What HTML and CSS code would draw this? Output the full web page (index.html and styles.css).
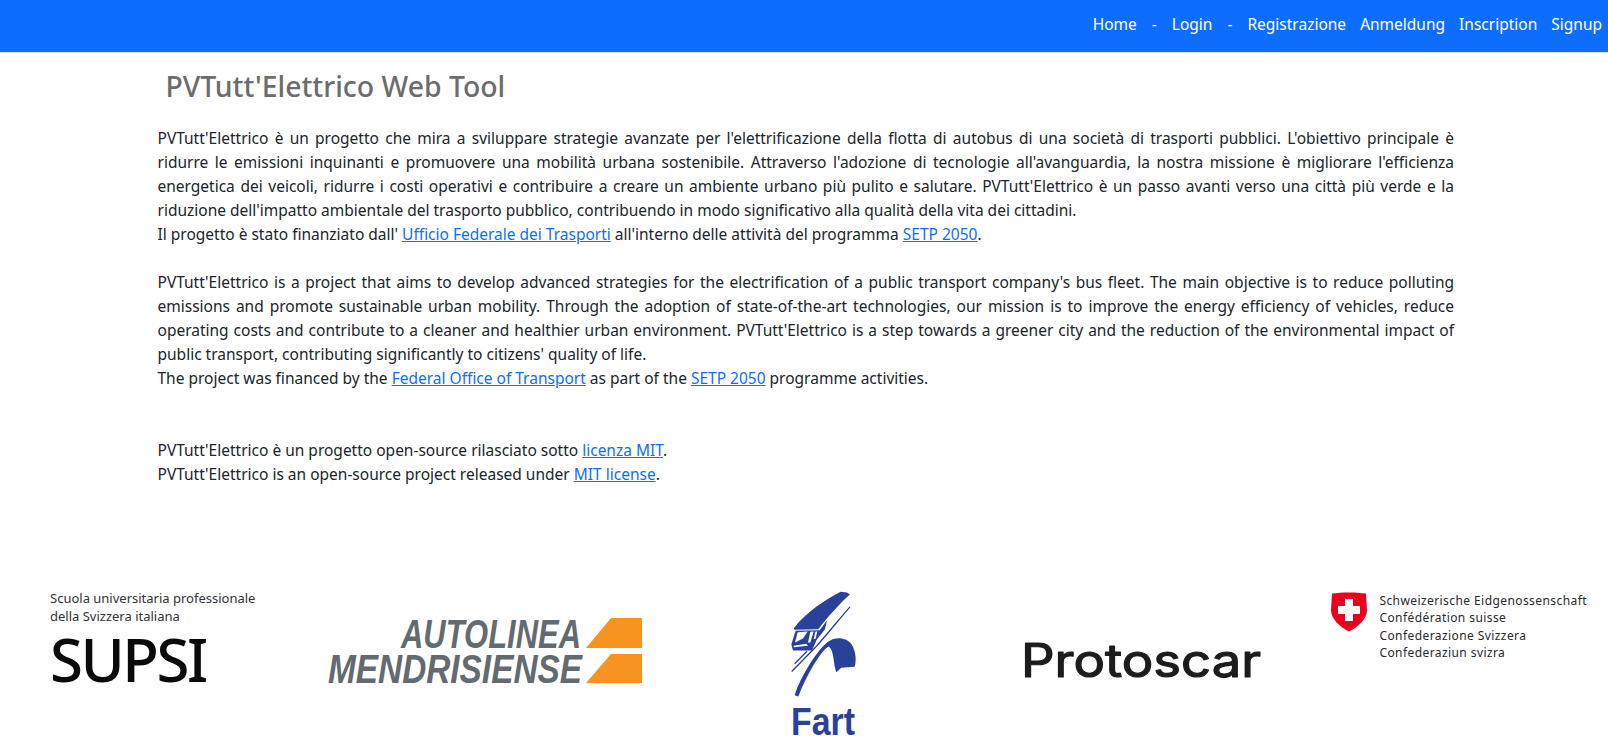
FILE: index.html
```html
<!DOCTYPE html>
<html lang="it">
<head>
<meta charset="utf-8">
<title>PVTutt'Elettrico Web Tool</title>
<link rel="stylesheet" href="styles.css">
</head>
<body>
<nav class="navbar">
  <a href="#">Home</a><span class="sep">-</span><a href="#">Login</a><span class="sep">-</span><a href="#">Registrazione</a><a href="#">Anmeldung</a><a href="#">Inscription</a><a href="#">Signup</a>
</nav>
<main class="container">
  <h3 class="title">PVTutt'Elettrico Web Tool</h3>
  <div class="intro">
    <span class="line just">PVTutt'Elettrico è un progetto che mira a sviluppare strategie avanzate per l'elettrificazione della flotta di autobus di una società di trasporti pubblici. L'obiettivo principale è</span>
    <span class="line just">ridurre le emissioni inquinanti e promuovere una mobilità urbana sostenibile. Attraverso l'adozione di tecnologie all'avanguardia, la nostra missione è migliorare l'efficienza</span>
    <span class="line just">energetica dei veicoli, ridurre i costi operativi e contribuire a creare un ambiente urbano più pulito e salutare. PVTutt'Elettrico è un passo avanti verso una città più verde e la</span>
    <span class="line">riduzione dell'impatto ambientale del trasporto pubblico, contribuendo in modo significativo alla qualità della vita dei cittadini.</span>
    <span class="line">Il progetto è stato finanziato dall' <a href="#">Ufficio Federale dei Trasporti</a> all'interno delle attività del programma <a href="#">SETP 2050</a>.</span>
    <span class="line blank"></span>
    <span class="line just">PVTutt'Elettrico is a project that aims to develop advanced strategies for the electrification of a public transport company's bus fleet. The main objective is to reduce polluting</span>
    <span class="line just">emissions and promote sustainable urban mobility. Through the adoption of state-of-the-art technologies, our mission is to improve the energy efficiency of vehicles, reduce</span>
    <span class="line just">operating costs and contribute to a cleaner and healthier urban environment. PVTutt'Elettrico is a step towards a greener city and the reduction of the environmental impact of</span>
    <span class="line">public transport, contributing significantly to citizens' quality of life.</span>
    <span class="line">The project was financed by the <a href="#">Federal Office of Transport</a> as part of the <a href="#">SETP 2050</a> programme activities.</span>
    <span class="line blank"></span>
    <span class="line blank"></span>
    <span class="line">PVTutt'Elettrico è un progetto open-source rilasciato sotto <a href="#">licenza MIT</a>.</span>
    <span class="line">PVTutt'Elettrico is an open-source project released under <a href="#">MIT license</a>.</span>
  </div>
</main>
<footer class="logos">
  <div class="logo supsi">
    <p class="supsi-small">Scuola universitaria professionale<br>della Svizzera italiana</p>
    <p class="supsi-big">SUPSI</p>
  </div>
  <svg class="logo autolinea" viewBox="0 -10 314 85" width="314" height="85" role="img" aria-label="Autolinea Mendrisiense">
    <text class="al-text" x="73" y="30" textLength="180" lengthAdjust="spacingAndGlyphs">AUTOLINEA</text>
    <text class="al-text" x="0" y="65" textLength="254" lengthAdjust="spacingAndGlyphs">MENDRISIENSE</text>
    <polygon class="al-orange" points="283,0 314,0 314,30 258,30"/>
    <polygon class="al-orange" points="283,36 314,36 314,65 258,65"/>
  </svg>
  <svg class="logo fart" viewBox="130 65 261 470" width="87" height="157" role="img" aria-label="Fart">
    <path class="fart-fill" d="M162 180C200 130 260 92 303 70L322 72L331 78C300 105 262 148 236 182L165 184Z"/>
    <path class="fart-fill" d="M168 187L240 185L262 155L256 182L232 212L217 246L160 246L155 228Z"/>
    <path class="fart-white" d="M174 191L204 189L190 210L166 222Z"/>
    <path class="fart-white" d="M212 190L222 189L212 222L205 222Z"/>
    <path class="fart-white" d="M227 190L233 188L228 210L222 212Z"/>
    <path class="fart-white" d="M162 232L200 226L205 232L162 236Z"/>
    <path class="fart-line" d="M156 309L226 238C265 195 300 150 331 115"/>
    <path class="fart-line" d="M165 286L202 248"/>
    <path class="fart-fill" d="M165 380C185 320 230 250 262 222C285 203 320 205 336 228C350 250 350 280 345 295L305 298L290 311C280 285 284 248 268 234C250 238 205 310 176 384Z"/>
    <text class="fart-text" x="154" y="498" textLength="192" lengthAdjust="spacingAndGlyphs">Fart</text>
  </svg>
  <svg class="logo protoscar" viewBox="0 -10 240 60" width="240" height="60" role="img" aria-label="Protoscar">
    <text class="proto-text" x="0" y="36" textLength="240" lengthAdjust="spacingAndGlyphs">Protoscar</text>
  </svg>
  <div class="logo swiss">
    <svg class="shield" viewBox="0 0 36 40" width="36" height="40" aria-hidden="true">
      <path class="shield-red" d="M1 1.5C11 0 25 0 35 1.5L36 18C36 27 27 35 18 39.5C9 35 0 27 0 18Z"/>
      <path class="shield-white" d="M14 7H22V14H29V22H22V29H14V22H7V14H14Z"/>
    </svg>
    <p class="swiss-text">Schweizerische Eidgenossenschaft<br>Confédération suisse<br>Confederazione Svizzera<br>Confederaziun svizra</p>
  </div>
</footer>
</body>
</html>
```
FILE: styles.css
```css
* { box-sizing: border-box; }
html, body { margin: 0; padding: 0; }
body {
  font-family: "Noto Sans", "Open Sans", sans-serif;
  font-size: 15.5px;
  line-height: 24px;
  color: #212529;
  background: #fff;
  height: 753px;
  overflow: hidden;
}
a { color: #0d6efd; }
.navbar {
  height: 53px;
  background: #0d6efd;
  border-bottom: 1px solid #dee2e6;
  display: flex;
  justify-content: flex-end;
  align-items: center;
  gap: 14px;
  padding: 0 6px 4px 0;
  font-size: 15.5px;
}
.navbar a, .navbar .sep { color: #fff; text-decoration: none; }
.navbar .sep { margin: 0 1px; }
.container {
  width: 1320px;
  margin: 0 auto;
  padding: 0 10px 0 13.5px;
}
.title {
  margin: 0;
  padding: 14px 0 0 8px;
  height: 73px;
  font-size: 28.4px;
  line-height: 38px;
  font-weight: 500;
  color: #6c6c6c;
}
.line { display: block; white-space: nowrap; height: 24px; }
.line.just { text-align: justify; text-align-last: justify; white-space: normal; }
.logos {
  display: grid;
  grid-template-columns: repeat(5, 1fr);
  align-items: start;
  padding-top: 103px;
}
.logo { margin: 0; display: block; }
.supsi { margin-left: 50px; }
.supsi-small {
  margin: 0;
  font-size: 13px;
  line-height: 18px;
  color: #333;
}
.supsi-big {
  margin: 6px 0 0;
  font-size: 60px;
  font-weight: 500;
  line-height: 56px;
  letter-spacing: -2.5px;
  color: #0a0a0a;
}
.autolinea { margin: 19px 0 0 6px; }
.al-text {
  font-family: "Liberation Sans", sans-serif;
  font-size: 40px;
  font-style: italic;
  font-weight: 700;
  fill: #636a70;
}
.al-orange { fill: #f79420; }
.fart { margin: 1px 0 0 140px; }
.fart-fill { fill: #2a419a; }
.fart-white { fill: #fff; }
.fart-line { fill: none; stroke: #2a419a; stroke-width: 4; }
.fart-text {
  font-family: "Liberation Sans", sans-serif;
  font-size: 118px;
  font-weight: 700;
  fill: #2a419a;
}
.protoscar { margin: 42px 0 0 56px; }
.proto-text {
  font-family: "Inter", sans-serif;
  font-size: 46px;
  font-weight: 400;
  fill: #1c1c1c;
  stroke: #1c1c1c;
  stroke-width: 1.2;
  stroke-linejoin: round;
}
.swiss { display: flex; gap: 12px; margin: 3px 0 0 45px; }
.shield-red { fill: #e8001e; }
.shield-white { fill: #fff; }
.swiss-text {
  margin: 0;
  font-size: 12px;
  line-height: 17.4px;
  letter-spacing: 0.42px;
  color: #2a2a2a;
  white-space: nowrap;
}
```
